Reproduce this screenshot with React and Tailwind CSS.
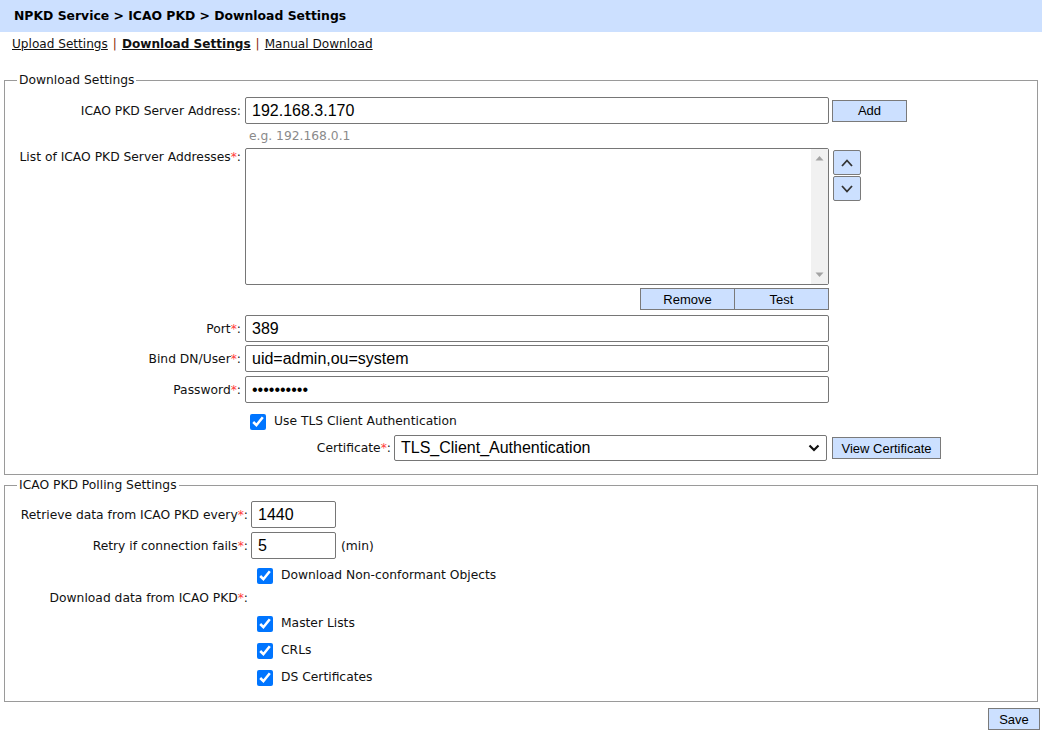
import React from "react";

function Star() {
  return <span className="text-[#ff3b3b]">*</span>;
}

function Btn({ children, className = "" }) {
  return (
    <button
      type="button"
      className={`h-[22px] bg-[#cce0ff] border border-[#7a7a7a] text-[13px] leading-none font-['Liberation_Sans',Arial,sans-serif] text-black ${className}`}
    >
      {children}
    </button>
  );
}

function TextInput({ value, type = "text", className = "" }) {
  return (
    <input
      type={type}
      readOnly
      value={value}
      className={`h-[27px] border border-[#767676] rounded-[2px] bg-white px-[6px] text-[16px] text-black font-['Liberation_Sans',Arial,sans-serif] outline-none ${className}`}
    />
  );
}

function Check({ label, className = "" }) {
  return (
    <label className={`flex items-center ${className}`}>
      <input type="checkbox" defaultChecked className="w-4 h-4 accent-[#0075ff]" />
      <span className="ml-[8px]">{label}</span>
    </label>
  );
}

function Legend({ children }) {
  return <legend className="ml-0 px-[2px] leading-4 text-[#111]">{children}</legend>;
}

function Chevron({ up }) {
  return (
    <svg width="14" height="10" viewBox="0 0 14 10">
      <polyline
        points={up ? "2,8 7,2.5 12,8" : "2,2 7,7.5 12,2"}
        fill="none"
        stroke="#333"
        strokeWidth="1.8"
      />
    </svg>
  );
}

export default function App() {
  return (
    <div className="w-[1042px] h-[733px] bg-white text-[#111] font-['DejaVu_Sans',Verdana,sans-serif] text-[12.3px] overflow-hidden">
      <div className="h-8 bg-[#cce0ff] flex items-center pl-[14px] pt-[1px] font-bold text-[12.4px] text-black">
        NPKD Service &gt; ICAO PKD &gt; Download Settings
      </div>
      <div className="h-6 flex items-center pl-3 text-[12.1px]">
        <span className="underline">Upload Settings</span>
        <span className="mx-[5px] text-[#8b2a0a]">|</span>
        <span className="underline font-bold">Download Settings</span>
        <span className="mx-[5px] text-[#8b2a0a]">|</span>
        <span className="underline">Manual Download</span>
      </div>

      <fieldset className="ml-1 w-[1034px] mt-4 border border-[#9a9a9a] px-3 pt-[9px] pb-[13px]">
        <Legend>Download Settings</Legend>

        <div className="flex items-center h-[27px]">
          <div className="w-[224px] text-right pt-[1px]">ICAO PKD Server Address:</div>
          <TextInput value="192.168.3.170" className="ml-1 w-[584px]" />
          <Btn className="ml-[3px] w-[75px]">Add</Btn>
        </div>

        <div className="h-6 flex items-center pl-[232px] text-[#8a8a8a]">e.g. 192.168.0.1</div>

        <div className="flex items-start">
          <div className="w-[224px] text-right mt-[1px] leading-4">
            List of ICAO PKD Server Addresses<Star />:
          </div>
          <div className="ml-1 w-[584px] h-[137px] border border-[#767676] rounded-[2px] bg-white flex justify-end">
            <div className="w-[17px] h-full bg-[#f1f1f1] flex flex-col items-center justify-between py-[6px]">
              <svg width="9" height="6" viewBox="0 0 9 6">
                <polygon points="0.5,5.5 4.5,1 8.5,5.5" fill="#a3a3a3" />
              </svg>
              <svg width="9" height="6" viewBox="0 0 9 6">
                <polygon points="0.5,0.5 4.5,5 8.5,0.5" fill="#a3a3a3" />
              </svg>
            </div>
          </div>
          <div className="ml-[4px] mt-[2px] flex flex-col gap-[1px]">
            <button type="button" className="w-[28px] h-[25px] bg-[#cce0ff] border border-[#7a7a7a] rounded-[2px] flex items-center justify-center">
              <Chevron up />
            </button>
            <button type="button" className="w-[28px] h-[25px] bg-[#cce0ff] border border-[#7a7a7a] rounded-[2px] flex items-center justify-center">
              <Chevron />
            </button>
          </div>
        </div>

        <div className="w-[812px] mt-[3px] flex justify-end">
          <Btn className="w-[95px]">Remove</Btn>
          <Btn className="w-[94px] border-l-0">Test</Btn>
        </div>

        <div className="flex items-center h-[27px] mt-[5px]">
          <div className="w-[224px] text-right pt-[1px]">
            Port<Star />:
          </div>
          <TextInput value="389" className="ml-1 w-[584px]" />
        </div>
        <div className="flex items-center h-[27px] mt-[3px]">
          <div className="w-[224px] text-right pt-[1px]">
            Bind DN/User<Star />:
          </div>
          <TextInput value="uid=admin,ou=system" className="ml-1 w-[584px]" />
        </div>
        <div className="flex items-center h-[27px] mt-[4px]">
          <div className="w-[224px] text-right pt-[1px]">
            Password<Star />:
          </div>
          <TextInput type="password" value="••••••••••" className="ml-1 w-[584px] text-[13px]" />
        </div>

        <Check label="Use TLS Client Authentication" className="h-6 mt-[6px] pl-[233px] pt-[1px]" />

        <div className="flex items-center h-[26px] mt-[2px]">
          <div className="w-[374px] text-right pt-[1px]">
            Certificate<Star />:
          </div>
          <div className="ml-[3px] w-[433px] h-[26px] border border-[#767676] rounded-[2px] bg-white flex items-center justify-between pl-[6px] pr-[6px] text-[16px] text-black font-['Liberation_Sans',Arial,sans-serif]">
            <span>TLS_Client_Authentication</span>
            <svg width="12" height="8" viewBox="0 0 12 8">
              <polyline points="1.5,1.5 6,6 10.5,1.5" fill="none" stroke="#111" strokeWidth="2.2" />
            </svg>
          </div>
          <Btn className="ml-[5px] w-[109px]">View Certificate</Btn>
        </div>
      </fieldset>

      <fieldset className="ml-1 w-[1034px] mt-[2px] border border-[#9a9a9a] px-3 pt-[8px] pb-[10px]">
        <Legend>ICAO PKD Polling Settings</Legend>

        <div className="flex items-center h-[27px]">
          <div className="w-[231px] text-right pt-[1px]">
            Retrieve data from ICAO PKD every<Star />:
          </div>
          <TextInput value="1440" className="ml-[3px] w-[85px]" />
        </div>
        <div className="flex items-center h-[27px] mt-[4px]">
          <div className="w-[231px] text-right pt-[1px]">
            Retry if connection fails<Star />:
          </div>
          <TextInput value="5" className="ml-[3px] w-[85px]" />
          <span className="ml-[5px] pt-[1px]">(min)</span>
        </div>

        <Check label="Download Non-conformant Objects" className="h-[23px] mt-[5px] pl-[240px]" />

        <div className="flex items-center h-[23px]">
          <div className="w-[231px] text-right">
            Download data from ICAO PKD<Star />:
          </div>
        </div>

        <Check label="Master Lists" className="h-[27px] pl-[240px]" />
        <Check label="CRLs" className="h-[27px] pl-[240px]" />
        <Check label="DS Certificates" className="h-[27px] pl-[240px]" />
      </fieldset>

      <div className="flex justify-end pr-[2px] mt-[6px]">
        <Btn className="w-[52px]">Save</Btn>
      </div>
    </div>
  );
}
